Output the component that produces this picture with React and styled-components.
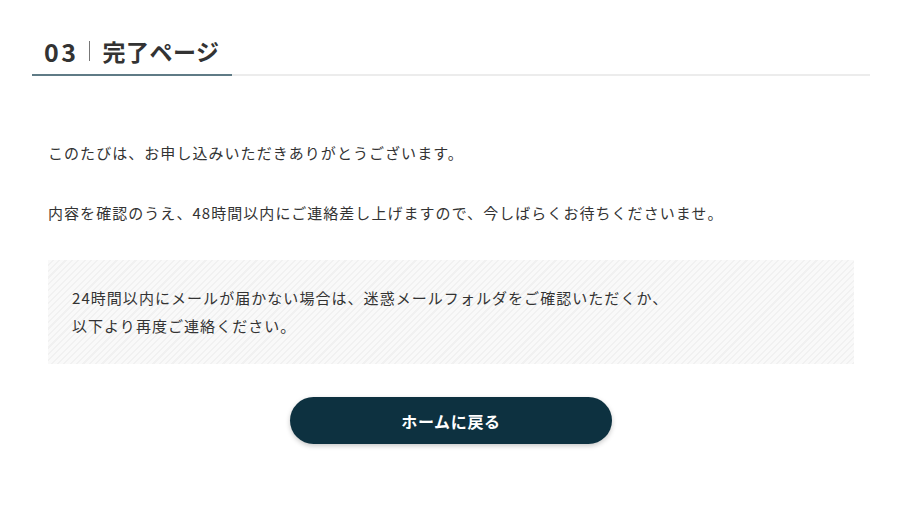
import React from "react";
import styled, { createGlobalStyle } from "styled-components";

const Global = createGlobalStyle`
  html, body { margin: 0; padding: 0; background: #fff; }
  body {
    font-family: "Noto Sans CJK JP", "Noto Sans", sans-serif;
    color: #333;
  }
`;

const Page = styled.main`
  padding: 33px 30px 40px 32px;
`;

const HeadingBar = styled.div`
  display: flex;
  border-bottom: 2px solid #ececec;
`;

const Heading = styled.h2`
  display: flex;
  align-items: center;
  margin: 0 0 -2px;
  width: 200px;
  box-sizing: border-box;
  padding: 0 12px 5px;
  border-bottom: 2px solid #5f7b86;
  font-size: 23px;
  line-height: 36px;
  font-weight: 700;
  color: #333;
  letter-spacing: 0.02em;
  white-space: nowrap;
`;

const Number = styled.span`
  font-size: 25px;
  letter-spacing: 0.1em;
`;

const Divider = styled.span`
  display: inline-block;
  width: 1px;
  height: 20px;
  background: #777;
  margin: 0 13px 0 10px;
`;

const Body = styled.section`
  padding: 63px 16px 0;
  display: flex;
  flex-direction: column;
`;

const Text = styled.p`
  margin: 0 0 ${(p) => p.$gap || 0}px;
  font-size: 15px;
  line-height: 28px;
  letter-spacing: 0.07em;
`;

const Notice = styled.div`
  padding: 24px 24px;
  background: repeating-linear-gradient(
    135deg,
    #f9f9f9 0px,
    #f9f9f9 3px,
    #f1f1f1 3px,
    #f1f1f1 4.5px
  );
  margin-bottom: 33px;
`;

const ButtonRow = styled.div`
  display: flex;
  justify-content: center;
`;

const HomeButton = styled.button`
  width: 322px;
  height: 47px;
  border: none;
  border-radius: 24px;
  background: #0d3140;
  color: #fff;
  font-family: inherit;
  font-size: 16px;
  font-weight: 700;
  letter-spacing: 0.04em;
  box-shadow: 0 2px 5px rgba(0, 0, 0, 0.22);
  cursor: pointer;
`;

export default function App() {
  return (
    <>
      <Global />
      <Page>
        <HeadingBar>
          <Heading>
            <Number>03</Number>
            <Divider />完了ページ
          </Heading>
        </HeadingBar>
        <Body>
          <Text $gap={32}>このたびは、お申し込みいただきありがとうございます。</Text>
          <Text $gap={33}>
            内容を確認のうえ、48時間以内にご連絡差し上げますので、今しばらくお待ちくださいませ。
          </Text>
          <Notice>
            <Text>
              24時間以内にメールが届かない場合は、迷惑メールフォルダをご確認いただくか、
              <br />
              以下より再度ご連絡ください。
            </Text>
          </Notice>
          <ButtonRow>
            <HomeButton>ホームに戻る</HomeButton>
          </ButtonRow>
        </Body>
      </Page>
    </>
  );
}
